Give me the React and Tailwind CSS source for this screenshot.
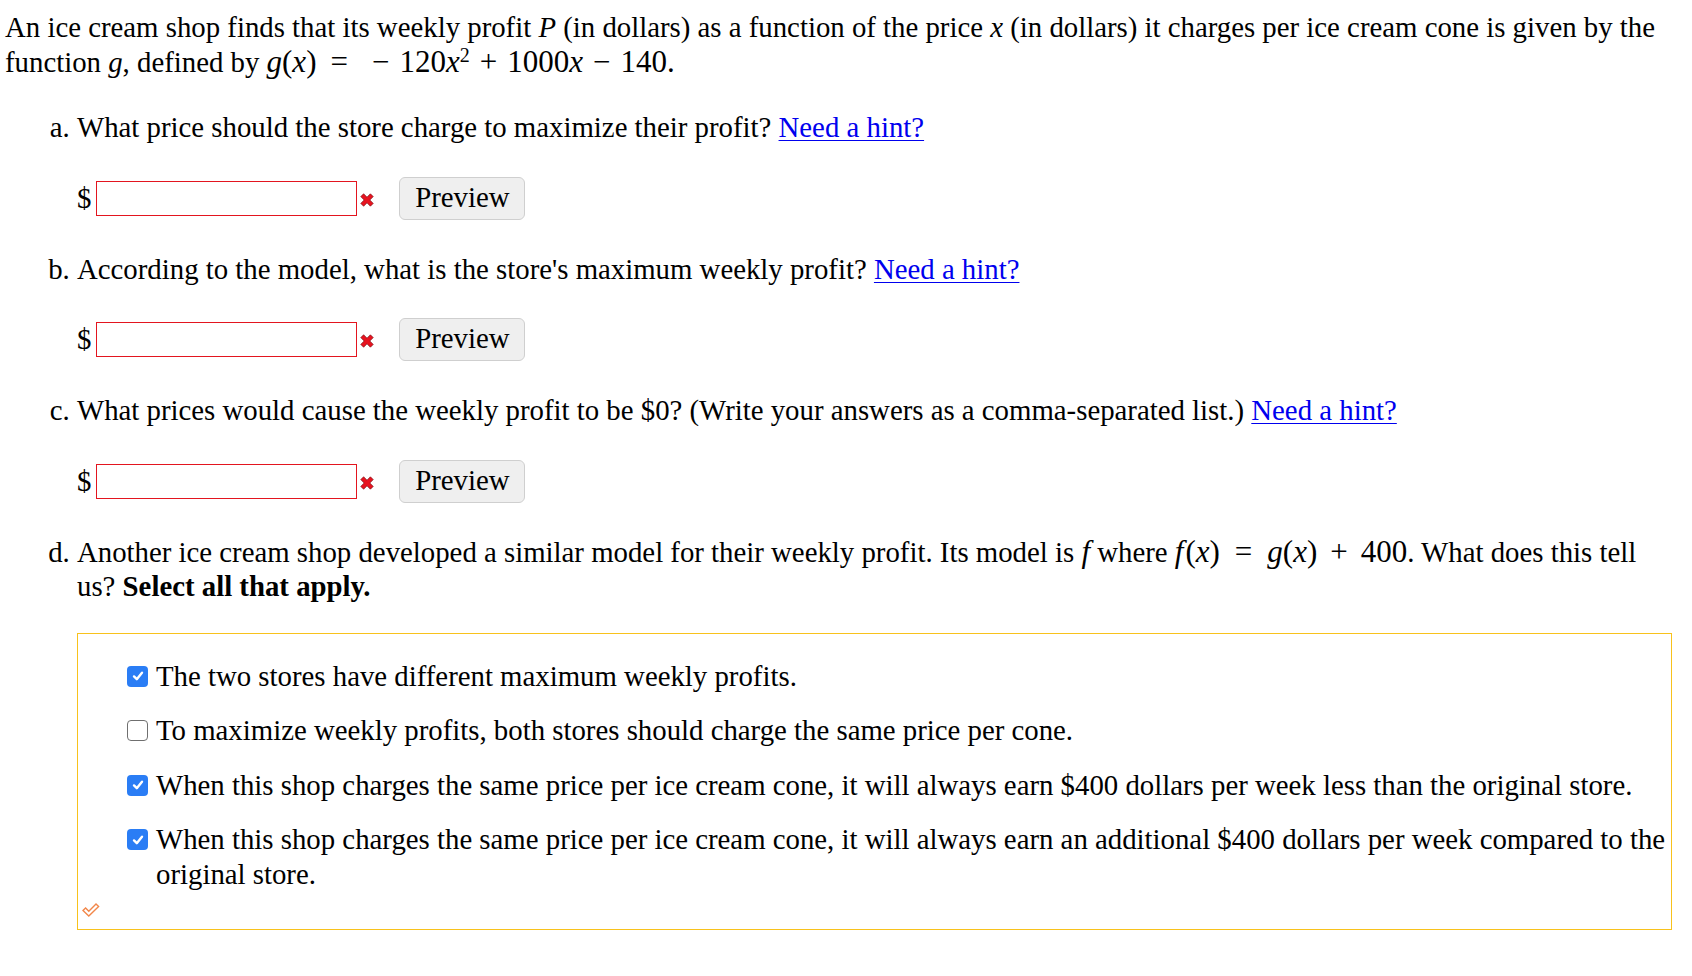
import React from "react";

const Hint = () => (
  <a href="#" className="text-[#0000ee] underline underline-offset-[3px] decoration-1">
    Need a hint?
  </a>
);

function RedX() {
  return (
    <svg width="16" height="16" viewBox="0 0 16 16" className="shrink-0">
      <path
        d="M1.8 4.6 L4.6 1.8 L8 5.2 L11.4 1.8 L14.2 4.6 L10.8 8 L14.2 11.4 L11.4 14.2 L8 10.8 L4.6 14.2 L1.8 11.4 L5.2 8 Z"
        fill="#e8131f"
        stroke="#7a0e14"
        strokeWidth="0.7"
        strokeLinejoin="round"
      />
    </svg>
  );
}

function AnswerRow() {
  return (
    <div className="flex items-center mt-[32px] mb-[32px] h-[43px]">
      <span className="mr-[5px]">$</span>
      <input
        type="text"
        className="w-[261px] h-[35px] border border-[#e3151f] bg-white outline-none px-1"
      />
      <span className="ml-[2px] mt-[3px]">
        <RedX />
      </span>
      <button className="ml-[24px] w-[126px] h-[43px] bg-[#efefef] border border-[#cfcfcf] rounded-[6px] text-[28.8px] leading-none pb-[2px]">
        Preview
      </button>
    </div>
  );
}

function Box({ checked }) {
  if (checked) {
    return (
      <span className="shrink-0 mt-[7px] w-[21px] h-[21px] rounded-[4px] bg-[#2a7df5] flex items-center justify-center">
        <svg width="14" height="14" viewBox="0 0 14 14">
          <path d="M3 7.4 L5.8 10.2 L11 3.8" fill="none" stroke="white" strokeWidth="2.4" strokeLinecap="round" strokeLinejoin="round" />
        </svg>
      </span>
    );
  }
  return (
    <span className="shrink-0 mt-[7px] w-[21px] h-[21px] rounded-[4px] bg-white border-[1.5px] border-[#6f6f6f]" />
  );
}

const options = [
  { text: "The two stores have different maximum weekly profits.", checked: true },
  { text: "To maximize weekly profits, both stores should charge the same price per cone.", checked: false },
  {
    text: "When this shop charges the same price per ice cream cone, it will always earn $400 dollars per week less than the original store.",
    checked: true,
  },
  {
    text: "When this shop charges the same price per ice cream cone, it will always earn an additional $400 dollars per week compared to the original store.",
    checked: true,
  },
];

function App() {
  return (
    <div className="font-['Liberation_Serif','Times_New_Roman',serif] text-[28.8px] leading-[34.5px] text-black bg-white min-h-[976px] pl-[5px] pr-[20px] pt-[10px]">
      <p>
        An ice cream shop finds that its weekly profit <i>P</i> (in dollars) as a function of the price <i>x</i> (in
        dollars) it charges per ice cream cone is given by the function <i>g</i>, defined by{" "}
        <span className="text-[31px]">
          <i>g</i>(<i>x</i>)<span className="ml-[14px] mr-[10px]">=</span>
          <span className="ml-[14px] mr-[10px]">−</span>120<i>x</i>
          <sup className="text-[20px]">2</sup>
          <span className="ml-[10px] mr-[10px]">+</span>1000<i>x</i>
          <span className="mx-[10px]">−</span>140.
        </span>
      </p>

      <ol className="list-[lower-alpha] list-outside pl-[72px] mt-[31px]">
        <li>
          What price should the store charge to maximize their profit? <Hint />
          <AnswerRow />
        </li>
        <li>
          According to the model, what is the store's maximum weekly profit? <Hint />
          <AnswerRow />
        </li>
        <li>
          What prices would cause the weekly profit to be $0? (Write your answers as a comma-separated list.){" "}
          <Hint />
          <AnswerRow />
        </li>
        <li>
          Another ice cream shop developed a similar model for their weekly profit. Its model is{" "}
          <i className="text-[31px]">f</i> where{" "}
          <span className="text-[31px]">
            <i className="mr-[2px]">f</i>(<i>x</i>)<span className="mx-[15px]">=</span>
            <i>g</i>(<i>x</i>)<span className="mx-[13px]">+</span>400
          </span>
          . What does this tell us? <b>Select all that apply.</b>
          <div className="mt-[29px] border border-[#f8c21c] pt-[25px] pb-[10px] pr-[4px]">
            {options.map((o, i) => (
              <div
                key={i}
                className={"flex gap-[8px] pl-[49px] " + (i === options.length - 1 ? "mb-[12px]" : "mb-[20px]")}
              >
                <Box checked={o.checked} />
                <span>{o.text}</span>
              </div>
            ))}
            <div className="pl-[4px] h-[16px]">
              <svg width="18" height="14" viewBox="0 0 18 14">
                <path
                  d="M1 7.5 L3.6 5 L6.8 8.2 L14 1 L16.6 3.6 L6.8 13 Z"
                  fill="none"
                  stroke="#f2874a"
                  strokeWidth="1.4"
                  strokeLinejoin="miter"
                />
              </svg>
            </div>
          </div>
        </li>
      </ol>
    </div>
  );
}

export default App;
